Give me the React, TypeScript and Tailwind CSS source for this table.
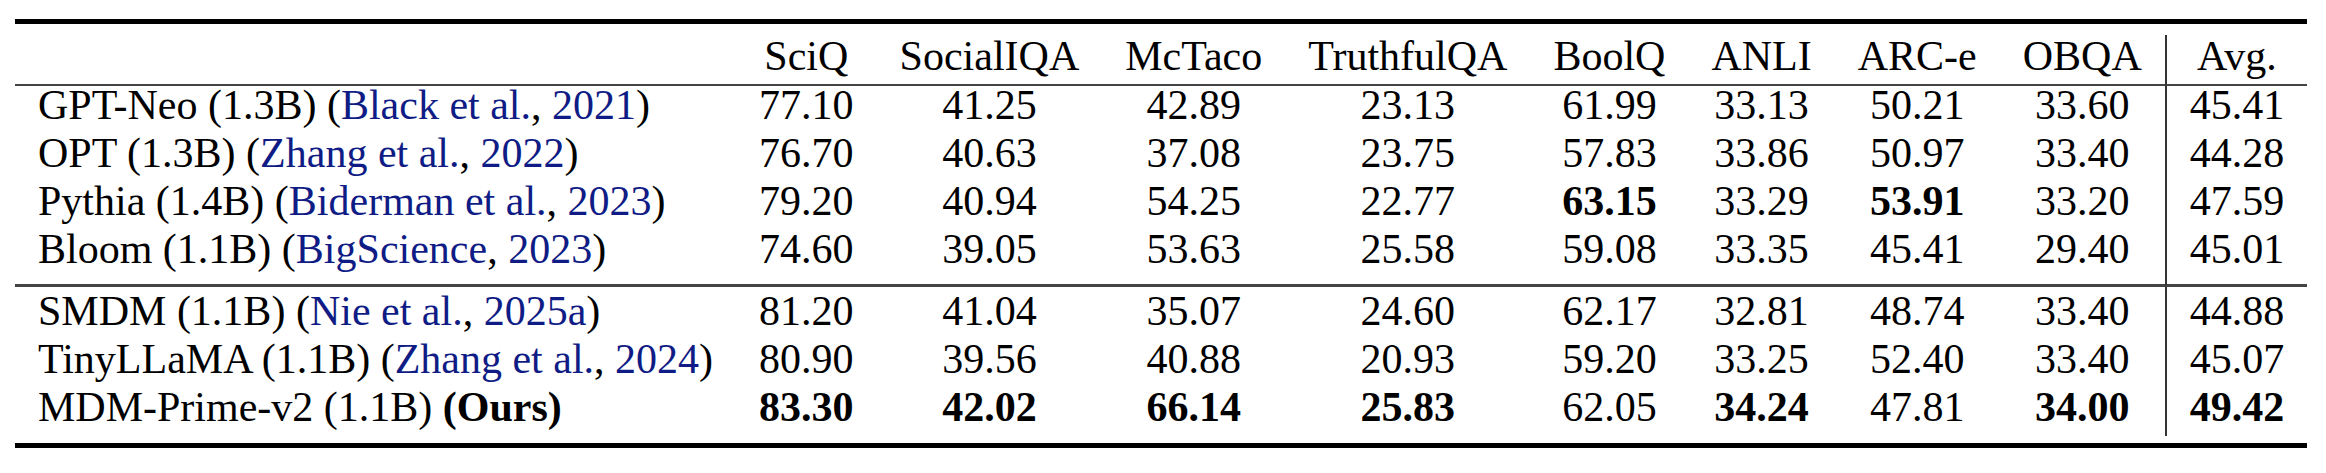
const headers = ['SciQ', 'SocialIQA', 'McTaco', 'TruthfulQA', 'BoolQ', 'ANLI', 'ARC-e', 'OBQA', 'Avg.'];

type Row = {
  model: string;
  cite?: { who: string; year: string };
  scores: string[];
  bold: number[];
};

const rows: Row[] = [
  { model: 'GPT-Neo (1.3B)', cite: { who: 'Black et al.', year: '2021' }, scores: ['77.10', '41.25', '42.89', '23.13', '61.99', '33.13', '50.21', '33.60', '45.41'], bold: [] },
  { model: 'OPT (1.3B)', cite: { who: 'Zhang et al.', year: '2022' }, scores: ['76.70', '40.63', '37.08', '23.75', '57.83', '33.86', '50.97', '33.40', '44.28'], bold: [] },
  { model: 'Pythia (1.4B)', cite: { who: 'Biderman et al.', year: '2023' }, scores: ['79.20', '40.94', '54.25', '22.77', '63.15', '33.29', '53.91', '33.20', '47.59'], bold: [4, 6] },
  { model: 'Bloom (1.1B)', cite: { who: 'BigScience', year: '2023' }, scores: ['74.60', '39.05', '53.63', '25.58', '59.08', '33.35', '45.41', '29.40', '45.01'], bold: [] },
  { model: 'SMDM (1.1B)', cite: { who: 'Nie et al.', year: '2025a' }, scores: ['81.20', '41.04', '35.07', '24.60', '62.17', '32.81', '48.74', '33.40', '44.88'], bold: [] },
  { model: 'TinyLLaMA (1.1B)', cite: { who: 'Zhang et al.', year: '2024' }, scores: ['80.90', '39.56', '40.88', '20.93', '59.20', '33.25', '52.40', '33.40', '45.07'], bold: [] },
  { model: 'MDM-Prime-v2 (1.1B)', scores: ['83.30', '42.02', '66.14', '25.83', '62.05', '34.24', '47.81', '34.00', '49.42'], bold: [0, 1, 2, 3, 5, 7, 8] },
];

// row heights: row 4 carries the midrule, row 5 the space below it
const rowCls = [
  'h-[48px]',
  'h-[48px]',
  'h-[48px]',
  'h-[57px] border-b-[3px] border-b-[#444]',
  'h-[53px] pt-[5px]',
  'h-[48px]',
  'h-[48px]',
];

const Cite = ({ who, year }: { who: string; year: string }) => (
  <>
    (<span className="text-[#101c85]">{who}</span>, <span className="text-[#101c85]">{year}</span>)
  </>
);

export default function App() {
  return (
    <div className="h-[473px] bg-white pl-[15px] pt-[19px] [font-family:Liberation_Serif,Times_New_Roman,serif] text-[42px] leading-[38px] text-black">
      <div className="w-fit">
        <div className="h-[5px] bg-black" />
        <div className="mt-[11px] grid grid-cols-[repeat(10,auto)]">
          <div className="h-[51px] border-b-2 border-b-[#444] px-[23px] pt-[2px]" />
          {headers.map((h, i) => (
            <div
              key={h}
              className={
                i === 8
                  ? 'h-[51px] border-b-2 border-l-2 border-b-[#444] border-l-[#333] px-[23px] pt-[2px] text-center'
                  : 'h-[51px] border-b-2 border-b-[#444] px-[23px] pt-[2px] text-center'
              }
            >
              {h}
            </div>
          ))}

          {rows.map((r, ri) => (
            <div key={r.model} className="contents">
              <div className={`${rowCls[ri]} whitespace-nowrap px-[23px] text-left`}>
                {r.model}{' '}
                {r.cite ? <Cite who={r.cite.who} year={r.cite.year} /> : <span className="font-bold">(Ours)</span>}
              </div>
              {r.scores.map((s, si) => (
                <div
                  key={si}
                  className={`${rowCls[ri]} px-[23px] text-center ${si === 8 ? 'border-l-2 border-l-[#333]' : ''} ${
                    r.bold.includes(si) ? 'font-bold' : ''
                  }`}
                >
                  {s}
                </div>
              ))}
            </div>
          ))}
        </div>
        <div className="mt-[7px] h-[5px] bg-black" />
      </div>
    </div>
  );
}
